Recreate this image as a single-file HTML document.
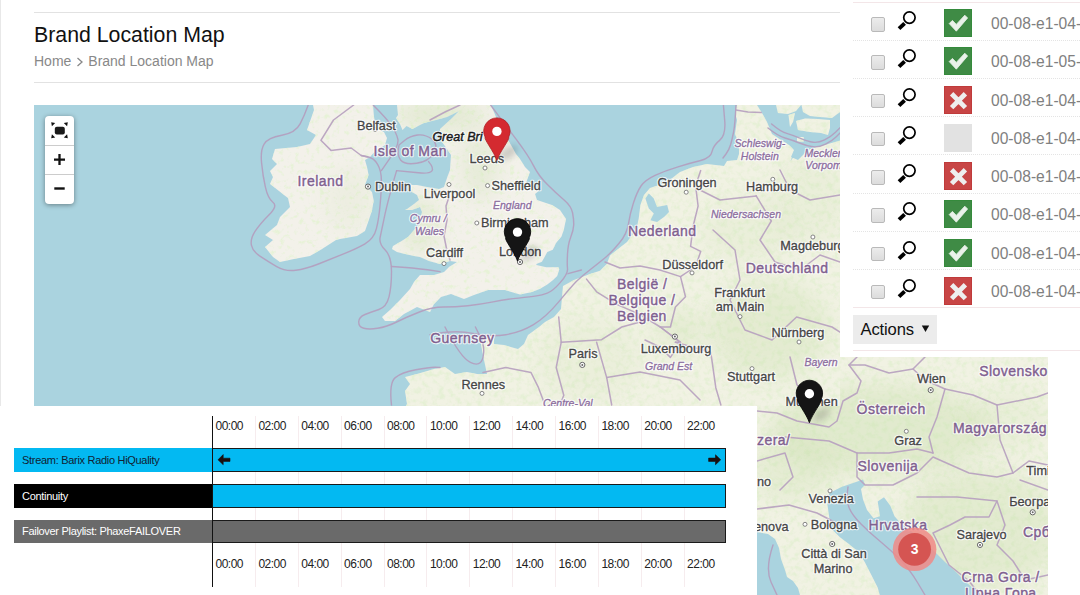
<!DOCTYPE html>
<html><head><meta charset="utf-8"><style>
*{box-sizing:border-box}
html,body{margin:0;padding:0}
body{width:1080px;height:595px;position:relative;overflow:hidden;background:#fff;font-family:"Liberation Sans",sans-serif}
.abs{position:absolute}
.cb{width:14px;height:14.5px;border:1px solid #b9b9b9;border-radius:2px;background:linear-gradient(#ececec,#dcdcdc)}
.st{width:28.2px;height:28px;border:1px solid}
.tt{font-size:15.6px;color:#808080;white-space:nowrap;line-height:18px}
.tl{font-size:12px;letter-spacing:-0.5px;color:#222;white-space:nowrap;line-height:14px}
.lb{font-size:11px;letter-spacing:-0.3px;white-space:nowrap;line-height:13px}

text{font-family:"Liberation Sans",sans-serif}
text.halo{fill:#fff;stroke:#fff;stroke-opacity:0.8;fill-opacity:0.8;stroke-width:2.6px;stroke-linejoin:round}
text.city{font-size:12.7px}
text.city.ink{fill:#454545;stroke:#454545;stroke-width:0.3px}
text.country{font-size:14px;letter-spacing:0.45px}
text.country.ink{fill:#7f608f;stroke:#7f608f;stroke-width:0.4px}
text.state{font-size:10.5px;font-style:italic}
text.state.ink{fill:#8c6e9e;stroke:#8c6e9e;stroke-width:0.3px}
text.clu{font-size:14px;font-weight:bold;fill:#fff;stroke:none}
text.gb{font-size:12.5px;font-style:italic}
text.gb.ink{fill:#1a1a1a;stroke:#1a1a1a;stroke-width:0.45px}
</style></head><body>
<div class="abs" style="left:0;top:0;width:1px;height:406px;background:#e8e8e8"></div>
<div class="abs" style="left:34px;top:12px;width:806px;height:1px;background:#e2e2e2"></div>
<div class="abs" style="left:34px;top:22px;font-size:21.3px;color:#111;white-space:nowrap;line-height:26px">Brand Location Map</div>
<div class="abs" style="left:34px;top:53px;font-size:14px;color:#888;white-space:nowrap;line-height:17px">Home</div>
<svg class="abs" style="left:76px;top:57px" width="8" height="10" viewBox="0 0 8 10"><path d="M1.5,1 L6,5 L1.5,9" fill="none" stroke="#888" stroke-width="1.3"/></svg>
<div class="abs" style="left:88.3px;top:53px;font-size:14px;color:#888;white-space:nowrap;line-height:17px">Brand Location Map</div>
<div class="abs" style="left:34px;top:82px;width:806px;height:1px;background:#e2e2e2"></div>
<svg class="abs" style="left:0;top:0" width="1080" height="595" viewBox="0 0 1080 595">
<defs>
<clipPath id="c1"><rect x="34" y="105" width="806" height="301"/></clipPath>
<clipPath id="c2"><path d="M840,357 L1048,357 L1048,595 L757,595 L757,406 L840,406 Z"/></clipPath>
<clipPath id="c2b"><rect x="757" y="105" width="291" height="490"/></clipPath>
<clipPath id="landclip"><path fill="#000" d="M313.0,105.0 L373.0,105.0 L374.0,117.0 L375.0,123.0 L378.0,129.0 L384.0,132.0 L387.0,138.0 L385.0,145.0 L374.0,152.5 L370.0,157.0 L365.0,160.0 L367.0,167.0 L368.6,175.0 L365.0,185.0 L372.0,192.0 L373.7,200.5 L372.0,210.6 L368.6,220.7 L365.0,231.0 L357.0,236.0 L340.0,239.0 L336.0,240.0 L322.0,249.0 L310.0,256.0 L294.0,259.0 L280.0,262.0 L273.0,257.0 L265.0,247.0 L273.0,240.0 L265.0,235.0 L277.0,225.0 L280.0,217.0 L290.0,207.0 L288.0,198.0 L284.0,195.0 L279.0,191.0 L270.0,184.0 L273.0,177.0 L270.0,171.0 L277.0,164.0 L272.0,159.0 L275.0,149.0 L297.0,147.0 L310.0,144.0 L316.0,135.0 L307.0,130.0 L314.0,110.0 Z" /><path fill="#000" d="M397.0,105.0 L491.0,105.0 L498.0,122.0 L504.0,134.0 L511.0,145.0 L516.0,154.0 L520.0,159.0 L525.0,167.0 L530.0,172.0 L526.0,183.0 L537.0,191.0 L540.0,190.0 L535.0,194.0 L537.0,200.0 L552.0,205.0 L560.0,210.0 L566.0,219.0 L564.0,229.0 L561.5,236.6 L556.0,243.0 L552.8,249.7 L547.3,251.9 L545.0,256.2 L541.9,261.7 L536.4,264.0 L536.4,265.0 L546.2,267.2 L558.3,267.2 L559.3,269.3 L557.2,275.9 L552.8,280.3 L547.3,284.6 L539.7,289.0 L531.0,292.3 L520.0,294.5 L505.0,290.0 L488.0,290.0 L474.0,295.0 L464.0,299.0 L451.0,294.0 L441.0,297.0 L434.0,304.0 L430.0,312.0 L417.0,307.0 L404.0,314.0 L395.0,321.0 L385.0,321.0 L382.0,317.0 L390.0,310.0 L400.0,300.0 L410.0,289.0 L414.0,282.0 L420.0,275.0 L434.0,275.0 L444.0,272.0 L449.0,267.0 L457.0,262.0 L450.0,261.0 L440.0,264.0 L429.0,261.0 L420.0,257.0 L414.0,256.0 L405.0,254.0 L397.0,252.0 L392.0,249.0 L393.0,246.0 L400.0,242.0 L408.0,237.0 L414.0,230.0 L419.0,224.0 L420.0,219.0 L422.0,212.0 L420.0,207.0 L412.0,210.0 L405.0,210.0 L407.0,209.0 L414.0,204.0 L419.0,200.0 L417.0,195.0 L412.0,192.0 L410.0,185.0 L417.0,185.0 L427.0,187.0 L439.0,189.0 L444.0,187.0 L447.0,178.0 L450.0,170.0 L451.0,155.0 L447.0,149.0 L440.0,139.0 L440.0,129.0 L450.0,120.0 L459.0,111.0 L447.0,117.0 L436.0,120.0 L424.0,123.0 L420.0,125.0 L412.5,129.0 L406.5,126.0 L402.5,130.0 L400.0,124.0 L396.0,118.0 L398.0,115.0 Z" /><path fill="#000" d="M737.0,105.0 L735.0,113.0 L737.0,120.0 L735.0,134.0 L739.0,144.0 L739.0,154.0 L737.0,160.0 L727.0,161.0 L724.0,166.0 L707.0,164.0 L693.0,167.0 L680.0,172.0 L666.0,183.0 L659.0,185.0 L650.0,188.0 L644.0,195.0 L640.4,205.0 L638.7,218.6 L637.0,227.0 L632.0,235.4 L627.0,242.0 L620.2,247.2 L610.0,255.6 L606.8,264.0 L600.0,270.7 L590.0,274.0 L574.0,280.0 L563.0,286.0 L562.0,297.0 L561.0,309.0 L554.0,317.0 L545.0,322.0 L539.0,327.0 L528.0,335.0 L524.0,344.0 L518.0,349.0 L504.0,345.0 L494.0,344.0 L494.0,335.0 L484.0,335.0 L481.0,344.0 L482.0,350.0 L484.0,360.0 L487.0,374.0 L477.0,374.0 L467.0,372.0 L455.0,374.0 L445.0,367.0 L434.0,369.0 L417.0,374.0 L405.0,377.0 L410.0,384.0 L405.0,391.0 L407.0,404.0 L406.0,406.0 L840.0,406.0 L840.0,140.0 L825.0,144.0 L808.0,150.0 L798.0,160.0 L791.0,157.0 L794.0,150.0 L789.0,145.0 L781.0,140.0 L772.0,134.0 L767.0,122.0 L762.0,113.0 L757.0,105.0 Z" /></clipPath>
<filter id="tex" x="0" y="0" width="1080" height="595" filterUnits="userSpaceOnUse"><feTurbulence type="fractalNoise" baseFrequency="0.18" numOctaves="3" seed="7" result="n"/><feColorMatrix in="n" type="matrix" values="0 0 0 0 0.78  0 0 0 0 0.87  0 0 0 0 0.66  3.2 0 0 0 -1.45" result="g"/><feComposite in="g" in2="SourceAlpha" operator="in" result="gl"/><feMerge><feMergeNode in="SourceGraphic"/><feMergeNode in="gl"/></feMerge></filter>
<filter id="tex2" x="0" y="0" width="1080" height="595" filterUnits="userSpaceOnUse"><feTurbulence type="fractalNoise" baseFrequency="0.2" numOctaves="3" seed="11" result="n"/><feColorMatrix in="n" type="matrix" values="0 0 0 0 0.80  0 0 0 0 0.89  0 0 0 0 0.68  4.0 0 0 0 -2.15" result="g"/><feComposite in="g" in2="SourceAlpha" operator="in" result="gl"/><feMerge><feMergeNode in="SourceGraphic"/><feMergeNode in="gl"/></feMerge></filter>
<filter id="blur8" x="-50%" y="-50%" width="200%" height="200%"><feGaussianBlur stdDeviation="10"/></filter>
<filter id="blur3" x="-50%" y="-50%" width="200%" height="200%"><feGaussianBlur stdDeviation="3"/></filter>
</defs>
<g clip-path="url(#c1)">
<rect x="34" y="105" width="806" height="301" fill="#aad3df"/>
<g filter="url(#tex2)">
<path fill="#f3f1ea" d="M313.0,105.0 L373.0,105.0 L374.0,117.0 L375.0,123.0 L378.0,129.0 L384.0,132.0 L387.0,138.0 L385.0,145.0 L374.0,152.5 L370.0,157.0 L365.0,160.0 L367.0,167.0 L368.6,175.0 L365.0,185.0 L372.0,192.0 L373.7,200.5 L372.0,210.6 L368.6,220.7 L365.0,231.0 L357.0,236.0 L340.0,239.0 L336.0,240.0 L322.0,249.0 L310.0,256.0 L294.0,259.0 L280.0,262.0 L273.0,257.0 L265.0,247.0 L273.0,240.0 L265.0,235.0 L277.0,225.0 L280.0,217.0 L290.0,207.0 L288.0,198.0 L284.0,195.0 L279.0,191.0 L270.0,184.0 L273.0,177.0 L270.0,171.0 L277.0,164.0 L272.0,159.0 L275.0,149.0 L297.0,147.0 L310.0,144.0 L316.0,135.0 L307.0,130.0 L314.0,110.0 Z" />
<path fill="#f3f1ea" d="M397.0,105.0 L491.0,105.0 L498.0,122.0 L504.0,134.0 L511.0,145.0 L516.0,154.0 L520.0,159.0 L525.0,167.0 L530.0,172.0 L526.0,183.0 L537.0,191.0 L540.0,190.0 L535.0,194.0 L537.0,200.0 L552.0,205.0 L560.0,210.0 L566.0,219.0 L564.0,229.0 L561.5,236.6 L556.0,243.0 L552.8,249.7 L547.3,251.9 L545.0,256.2 L541.9,261.7 L536.4,264.0 L536.4,265.0 L546.2,267.2 L558.3,267.2 L559.3,269.3 L557.2,275.9 L552.8,280.3 L547.3,284.6 L539.7,289.0 L531.0,292.3 L520.0,294.5 L505.0,290.0 L488.0,290.0 L474.0,295.0 L464.0,299.0 L451.0,294.0 L441.0,297.0 L434.0,304.0 L430.0,312.0 L417.0,307.0 L404.0,314.0 L395.0,321.0 L385.0,321.0 L382.0,317.0 L390.0,310.0 L400.0,300.0 L410.0,289.0 L414.0,282.0 L420.0,275.0 L434.0,275.0 L444.0,272.0 L449.0,267.0 L457.0,262.0 L450.0,261.0 L440.0,264.0 L429.0,261.0 L420.0,257.0 L414.0,256.0 L405.0,254.0 L397.0,252.0 L392.0,249.0 L393.0,246.0 L400.0,242.0 L408.0,237.0 L414.0,230.0 L419.0,224.0 L420.0,219.0 L422.0,212.0 L420.0,207.0 L412.0,210.0 L405.0,210.0 L407.0,209.0 L414.0,204.0 L419.0,200.0 L417.0,195.0 L412.0,192.0 L410.0,185.0 L417.0,185.0 L427.0,187.0 L439.0,189.0 L444.0,187.0 L447.0,178.0 L450.0,170.0 L451.0,155.0 L447.0,149.0 L440.0,139.0 L440.0,129.0 L450.0,120.0 L459.0,111.0 L447.0,117.0 L436.0,120.0 L424.0,123.0 L420.0,125.0 L412.5,129.0 L406.5,126.0 L402.5,130.0 L400.0,124.0 L396.0,118.0 L398.0,115.0 Z" />
</g>
<g filter="url(#tex)">
<path fill="#f1f2e3" d="M737.0,105.0 L735.0,113.0 L737.0,120.0 L735.0,134.0 L739.0,144.0 L739.0,154.0 L737.0,160.0 L727.0,161.0 L724.0,166.0 L707.0,164.0 L693.0,167.0 L680.0,172.0 L666.0,183.0 L659.0,185.0 L650.0,188.0 L644.0,195.0 L640.4,205.0 L638.7,218.6 L637.0,227.0 L632.0,235.4 L627.0,242.0 L620.2,247.2 L610.0,255.6 L606.8,264.0 L600.0,270.7 L590.0,274.0 L574.0,280.0 L563.0,286.0 L562.0,297.0 L561.0,309.0 L554.0,317.0 L545.0,322.0 L539.0,327.0 L528.0,335.0 L524.0,344.0 L518.0,349.0 L504.0,345.0 L494.0,344.0 L494.0,335.0 L484.0,335.0 L481.0,344.0 L482.0,350.0 L484.0,360.0 L487.0,374.0 L477.0,374.0 L467.0,372.0 L455.0,374.0 L445.0,367.0 L434.0,369.0 L417.0,374.0 L405.0,377.0 L410.0,384.0 L405.0,391.0 L407.0,404.0 L406.0,406.0 L840.0,406.0 L840.0,140.0 L825.0,144.0 L808.0,150.0 L798.0,160.0 L791.0,157.0 L794.0,150.0 L789.0,145.0 L781.0,140.0 L772.0,134.0 L767.0,122.0 L762.0,113.0 L757.0,105.0 Z" />
</g>
<g clip-path="url(#landclip)"><ellipse cx="440" cy="115" rx="45" ry="14" fill="#c4dca6" opacity="0.35" filter="url(#blur8)"/>
<ellipse cx="480" cy="165" rx="18" ry="35" fill="#c4dca6" opacity="0.25" filter="url(#blur8)"/>
<ellipse cx="420" cy="225" rx="18" ry="28" fill="#c4dca6" opacity="0.3" filter="url(#blur8)"/>
<ellipse cx="350" cy="200" rx="25" ry="30" fill="#c4dca6" opacity="0.12" filter="url(#blur8)"/>
<ellipse cx="770" cy="330" rx="60" ry="50" fill="#c4dca6" opacity="0.28" filter="url(#blur8)"/>
<ellipse cx="680" cy="330" rx="25" ry="20" fill="#c4dca6" opacity="0.25" filter="url(#blur8)"/>
<ellipse cx="750" cy="230" rx="45" ry="30" fill="#c4dca6" opacity="0.15" filter="url(#blur8)"/>
<ellipse cx="590" cy="360" rx="50" ry="40" fill="#c4dca6" opacity="0.12" filter="url(#blur8)"/>
<ellipse cx="810" cy="200" rx="35" ry="40" fill="#c4dca6" opacity="0.15" filter="url(#blur8)"/></g>
<path fill="#aad3df" d="M774.0,105.0 L840.0,105.0 L840.0,140.4 L836.5,141.5 L818.0,147.0 L806.0,143.7 L800.0,150.0 L794.0,156.0 L790.6,161.2 L792.8,154.6 L796.0,146.0 L792.8,140.4 L781.9,136.0 L772.0,127.3 L770.0,122.0 L774.0,114.0 Z" />
<g filter="url(#tex)">
<path fill="#f1f2e3" d="M776.0,105.0 L801.0,105.0 L796.0,111.0 L788.0,114.0 L778.0,113.0 Z" />
<path fill="#f1f2e3" d="M796.0,121.0 L805.0,118.6 L818.0,119.0 L830.0,120.0 L830.0,128.0 L828.0,135.0 L821.0,133.0 L810.0,132.0 L798.0,130.0 Z" />
<path fill="#f1f2e3" d="M801.5,105.0 L840.0,105.0 L840.0,112.0 L832.0,118.0 L820.0,117.0 L810.0,116.0 L803.0,112.0 Z" />
<path fill="#f1f2e3" d="M788.5,115.0 L795.0,113.0 L793.0,122.0 L790.0,127.0 Z" />
<path fill="#f1f2e3" d="M797.0,137.0 L803.7,137.0 L803.7,141.5 L797.0,141.5 Z" />
</g>
<path fill="#aad3df" d="M645.4,198.5 L648.8,208.5 L653.8,213.6 L650.4,220.3 L657.0,222.0 L664.0,217.0 L669.0,212.0 L667.2,205.0 L657.0,207.0 L653.8,198.5 L648.8,193.4 Z" />
<path fill="none" stroke="#b39fbf" stroke-width="1.4" stroke-linejoin="round" stroke-linecap="round" d="M308.2,105.0 Q304.7,115.0 300.1,123.9 Q295.6,132.8 281.8,135.3 Q267.9,137.8 264.1,144.1 Q260.3,150.4 261.6,163.1 Q262.8,175.7 265.4,187.1 Q267.9,198.4 272.9,202.2 Q278.0,206.0 269.1,214.8 Q260.3,223.6 255.2,231.2 Q250.2,238.8 251.4,245.1 Q252.7,251.4 260.3,256.4 Q267.9,261.5 276.7,266.6 Q285.5,271.6 295.6,270.3 Q305.7,269.0 318.4,264.0 Q331.0,259.0 343.6,253.9 Q356.2,248.9 365.0,243.9 Q373.9,238.8 376.4,228.7 Q378.9,218.6 380.1,204.7 Q381.4,190.8 381.4,180.7 Q381.4,170.6 377.6,164.3 Q373.9,158.0 367.5,156.8 L361.2,155.5" opacity="0.95"/>
<path fill="none" stroke="#b8a2c0" stroke-width="1.5" stroke-linejoin="round" stroke-linecap="round" d="M353.7,105.0 L333.5,120.0 L320.9,140.3 L331.0,150.4 L351.2,148.0 L361.2,155.5 L367.7,157.0" opacity="0.95"/>
<path fill="none" stroke="#b39fbf" stroke-width="1.4" stroke-linejoin="round" stroke-linecap="round" d="M373.3,105.2 Q387.6,119.4 392.1,126.5 Q396.7,133.7 397.9,139.3 Q399.0,145.0 390.2,157.8 L381.4,170.6" opacity="0.95"/>
<path fill="none" stroke="#b39fbf" stroke-width="1.4" stroke-linejoin="round" stroke-linecap="round" d="M399.0,145.0 Q396.6,155.0 400.6,160.0 Q404.6,165.0 416.6,163.3 Q428.6,161.6 433.8,153.1 Q439.0,144.5 432.0,139.2 Q425.0,134.0 417.5,135.0 Q410.0,136.0 404.5,140.5 L399.0,145.0" opacity="0.95"/>
<path fill="none" stroke="#b39fbf" stroke-width="1.4" stroke-linejoin="round" stroke-linecap="round" d="M396.6,170.6 Q388.0,200.0 384.7,215.6 Q381.4,231.2 380.1,237.5 Q378.9,243.8 385.2,250.1 Q391.5,256.4 391.5,271.5 Q391.5,286.7 389.0,296.9 Q386.5,307.0 378.9,309.5 Q371.3,312.0 365.0,314.5 Q358.7,317.0 358.7,322.0 Q358.7,327.0 363.8,328.3 Q368.8,329.6 377.6,328.3 Q386.5,327.0 396.6,322.0 Q406.7,317.0 419.4,312.0 Q432.0,307.0 443.6,307.0 Q455.2,307.0 467.9,305.7 Q480.5,304.4 493.1,301.9 Q505.7,299.3 518.4,298.1 Q531.0,296.8 536.5,295.9 Q541.9,295.0 547.3,293.1 Q552.8,291.2 560.4,282.4 Q568.0,273.7 567.5,268.8 Q567.0,263.9 567.5,254.0 Q568.0,244.2 570.8,237.1 Q573.5,230.0 573.7,225.0 Q573.9,220.0 572.6,213.0 Q571.3,206.0 563.8,199.7 Q556.2,193.3 547.4,184.5 Q538.5,175.7 533.5,165.6 Q528.4,155.5 517.0,140.3 Q505.7,125.2 498.1,115.1 L490.6,105.0" opacity="0.95"/>
<path fill="none" stroke="#b39fbf" stroke-width="1.4" stroke-linejoin="round" stroke-linecap="round" d="M391.5,266.5 Q415.0,268.0 427.5,269.8 L440.0,271.6" opacity="0.95"/>
<path fill="none" stroke="#b39fbf" stroke-width="1.4" stroke-linejoin="round" stroke-linecap="round" d="M428.6,161.6 Q440.0,175.0 418.3,172.8 L396.6,170.6" opacity="0.95"/>
<path fill="none" stroke="#b39fbf" stroke-width="1.4" stroke-linejoin="round" stroke-linecap="round" d="M391.5,405.0 Q389.0,382.6 395.3,377.6 Q401.6,372.5 415.8,369.8 Q430.0,367.0 435.0,367.2 L440.0,367.5" opacity="0.95"/>
<path fill="none" stroke="#b39fbf" stroke-width="1.4" stroke-linejoin="round" stroke-linecap="round" d="M430.0,334.7 Q455.2,329.6 472.9,333.4 Q490.6,337.2 505.8,334.7 Q520.9,332.2 533.5,324.6 Q546.1,317.0 558.7,301.9 Q571.3,286.7 576.3,281.6 Q581.4,276.6 590.7,269.3 Q600.0,262.0 606.0,257.0 Q612.0,252.0 619.5,242.8 Q627.0,233.7 628.5,223.6 Q630.0,213.6 633.5,202.8 Q637.0,192.0 641.0,186.0 Q645.0,180.0 655.1,175.3 Q665.3,170.6 678.0,166.8 Q690.6,163.0 700.7,160.5 Q710.8,158.0 712.0,151.7 Q713.3,145.4 719.6,140.4 Q726.0,135.3 724.7,120.2 L723.4,105.0" opacity="0.95"/>
<path fill="none" stroke="#b39fbf" stroke-width="1.4" stroke-linejoin="round" stroke-linecap="round" d="M568.0,273.7 L581.4,270.0" opacity="0.95"/>
<path fill="none" stroke="#b39fbf" stroke-width="1.4" stroke-linejoin="round" stroke-linecap="round" d="M445.0,327.0 Q460.3,357.4 470.4,362.4 Q480.5,367.5 483.0,357.4 Q485.5,347.3 480.4,337.1 L475.4,327.0" opacity="0.95"/>
<path fill="none" stroke="#b8a2c0" stroke-width="1.5" stroke-linejoin="round" stroke-linecap="round" d="M449.0,197.0 L446.0,206.0 L447.0,220.0 L444.0,236.0 L447.0,251.0 L450.0,260.0" opacity="0.95"/>
<path fill="none" stroke="#b8a2c0" stroke-width="1.5" stroke-linejoin="round" stroke-linecap="round" d="M430.0,120.0 L445.0,112.0 L460.0,105.0" opacity="0.95"/>
<path fill="none" stroke="#b8a2c0" stroke-width="1.5" stroke-linejoin="round" stroke-linecap="round" d="M586.5,279.1 L596.6,291.8 L616.8,304.4 L640.0,314.5 L660.3,327.0 L680.5,342.3 L675.4,342.3" opacity="0.95"/>
<path fill="none" stroke="#b8a2c0" stroke-width="1.5" stroke-linejoin="round" stroke-linecap="round" d="M605.0,262.0 L620.0,268.0 L640.0,266.0 L660.0,270.0 L680.5,276.6" opacity="0.95"/>
<path fill="none" stroke="#b8a2c0" stroke-width="1.5" stroke-linejoin="round" stroke-linecap="round" d="M700.7,170.6 L695.6,185.8 L698.1,206.0 L693.1,226.2 L690.6,246.3 L700.7,251.4 L695.6,266.5 L680.5,276.6 L685.5,296.8 L675.4,307.0 L670.4,327.0 L660.3,327.0" opacity="0.95"/>
<path fill="none" stroke="#b8a2c0" stroke-width="1.5" stroke-linejoin="round" stroke-linecap="round" d="M660.3,327.0 L680.5,342.3 L670.4,357.4 L660.3,347.3 L645.0,340.0" opacity="0.95"/>
<path fill="none" stroke="#b8a2c0" stroke-width="1.5" stroke-linejoin="round" stroke-linecap="round" d="M675.4,342.3 L710.8,352.3 L715.8,387.7 L720.9,405.0" opacity="0.95"/>
<path fill="none" stroke="#b8a2c0" stroke-width="1.5" stroke-linejoin="round" stroke-linecap="round" d="M483.0,372.5 L505.7,367.5 L531.0,372.5 L538.5,387.7 L545.0,405.0" opacity="0.95"/>
<path fill="none" stroke="#b8a2c0" stroke-width="1.5" stroke-linejoin="round" stroke-linecap="round" d="M558.7,317.0 L561.2,342.3 L556.2,367.5 L563.8,395.3 L560.0,405.0" opacity="0.95"/>
<path fill="none" stroke="#b8a2c0" stroke-width="1.5" stroke-linejoin="round" stroke-linecap="round" d="M561.2,342.3 L601.6,339.7 L621.8,327.0 L640.0,322.0" opacity="0.95"/>
<path fill="none" stroke="#b8a2c0" stroke-width="1.5" stroke-linejoin="round" stroke-linecap="round" d="M596.6,342.3 L606.7,377.6 L611.7,405.0" opacity="0.95"/>
<path fill="none" stroke="#b8a2c0" stroke-width="1.5" stroke-linejoin="round" stroke-linecap="round" d="M606.7,377.6 L640.0,372.0 L680.0,380.0 L700.0,400.0" opacity="0.95"/>
<path fill="none" stroke="#b39fbf" stroke-width="1.4" stroke-linejoin="round" stroke-linecap="round" d="M771.6,124.0 Q780.4,131.5 786.7,133.4 Q793.0,135.3 800.5,138.4 Q808.0,141.6 813.1,142.2 Q818.3,142.9 824.6,139.8 Q831.0,136.6 835.5,132.2 L840.0,127.7" opacity="0.95"/>
<path fill="none" stroke="#b39fbf" stroke-width="1.4" stroke-linejoin="round" stroke-linecap="round" d="M768.0,128.0 Q778.0,136.0 785.0,138.0 Q792.0,140.0 799.5,143.0 Q807.0,146.0 813.0,146.8 Q819.0,147.5 825.5,144.2 Q832.0,141.0 836.0,137.0 L840.0,133.0" opacity="0.95"/>
<path fill="none" stroke="#b39fbf" stroke-width="1.4" stroke-linejoin="round" stroke-linecap="round" d="M736.0,105.0 Q735.0,125.0 733.5,132.5 Q732.0,140.0 730.5,145.0 Q729.0,150.0 726.0,154.0 L723.0,158.0" opacity="0.95"/>
<path fill="none" stroke="#b8a2c0" stroke-width="1.5" stroke-linejoin="round" stroke-linecap="round" d="M736.0,110.0 L748.0,112.0 L761.2,112.6" opacity="0.95"/>
<path fill="none" stroke="#b8a2c0" stroke-width="1.5" stroke-linejoin="round" stroke-linecap="round" d="M756.2,195.9 L771.3,221.0 L760.0,240.0 L775.0,262.0 L800.0,270.0 L820.0,255.0 L840.0,262.0" opacity="0.95"/>
<path fill="none" stroke="#b8a2c0" stroke-width="1.5" stroke-linejoin="round" stroke-linecap="round" d="M713.0,230.0 L735.0,250.0 L740.0,280.0 L730.0,300.0 L745.0,330.0 L772.0,340.0 L796.6,317.0 L832.0,327.0 L840.0,332.2" opacity="0.95"/>
<path fill="none" stroke="#b8a2c0" stroke-width="1.5" stroke-linejoin="round" stroke-linecap="round" d="M780.0,170.0 L790.0,190.0 L810.0,200.0 L840.0,195.0" opacity="0.95"/>
<path fill="none" stroke="#b8a2c0" stroke-width="1.5" stroke-linejoin="round" stroke-linecap="round" d="M700.0,190.0 L720.0,200.0 L756.2,195.9" opacity="0.95"/>
<path fill="none" stroke="#b8a2c0" stroke-width="1.5" stroke-linejoin="round" stroke-linecap="round" d="M790.0,357.0 L797.0,385.0 L810.0,395.0 L829.0,404.0" opacity="0.95"/>
<circle cx="375" cy="129.5" r="2" fill="#fff" stroke="#777" stroke-width="0.9"/>
<circle cx="368" cy="186.6" r="2.6" fill="#fff" stroke="#666" stroke-width="1"/><circle cx="368" cy="186.6" r="1" fill="#666"/>
<circle cx="485" cy="168" r="2" fill="#fff" stroke="#777" stroke-width="0.9"/>
<circle cx="487.6" cy="185.6" r="2" fill="#fff" stroke="#777" stroke-width="0.9"/>
<circle cx="449" cy="184.5" r="2" fill="#fff" stroke="#777" stroke-width="0.9"/>
<circle cx="476.8" cy="223" r="2" fill="#fff" stroke="#777" stroke-width="0.9"/>
<circle cx="520" cy="262" r="2.6" fill="#fff" stroke="#666" stroke-width="1"/><circle cx="520" cy="262" r="1" fill="#666"/>
<circle cx="686.2" cy="192.2" r="2" fill="#fff" stroke="#777" stroke-width="0.9"/>
<circle cx="772.8" cy="179.3" r="2" fill="#fff" stroke="#777" stroke-width="0.9"/>
<circle cx="812.9" cy="237" r="2" fill="#fff" stroke="#777" stroke-width="0.9"/>
<circle cx="692" cy="272.9" r="2" fill="#fff" stroke="#777" stroke-width="0.9"/>
<circle cx="740" cy="316.6" r="2" fill="#fff" stroke="#777" stroke-width="0.9"/>
<circle cx="799" cy="342" r="2" fill="#fff" stroke="#777" stroke-width="0.9"/>
<circle cx="582.3" cy="364.9" r="2.6" fill="#fff" stroke="#666" stroke-width="1"/><circle cx="582.3" cy="364.9" r="1" fill="#666"/>
<circle cx="674.9" cy="336.6" r="2.6" fill="#fff" stroke="#666" stroke-width="1"/><circle cx="674.9" cy="336.6" r="1" fill="#666"/>
<circle cx="752" cy="368.6" r="2" fill="#fff" stroke="#777" stroke-width="0.9"/>
<circle cx="482" cy="393.4" r="2" fill="#fff" stroke="#777" stroke-width="0.9"/>
<circle cx="444" cy="263.6" r="2" fill="#fff" stroke="#777" stroke-width="0.9"/>
<text class="city halo" x="357" y="130">Belfast</text>
<text class="country halo" x="373.5" y="156">Isle of Man</text>
<text class="country halo" x="297.5" y="186">Ireland</text>
<text class="city halo" x="375" y="191.4">Dublin</text>
<text class="gb halo" x="432.4" y="140.9">Great Bri</text>
<text class="city halo" x="469.5" y="163.2">Leeds</text>
<text class="city halo" x="491.6" y="190">Sheffield</text>
<text class="city halo" x="423.8" y="198.2">Liverpool</text>
<text class="state halo" x="493" y="209">England</text>
<text class="state halo" x="409.8" y="221.6">Cymru /</text>
<text class="state halo" x="415" y="234.5">Wales</text>
<text class="city halo" x="481" y="227.3">Birmingham</text>
<text class="city halo" x="426" y="257.4">Cardiff</text>
<text class="city halo" x="499" y="255.5">London</text>
<text class="city halo" x="657.4" y="187.4">Groningen</text>
<text class="city halo" x="746" y="191.4">Hamburg</text>
<text class="state halo" x="734.6" y="147">Schleswig-</text>
<text class="state halo" x="740.8" y="159.7">Holstein</text>
<text class="state halo" x="804.5" y="156.5">Mecklenburg-</text>
<text class="state halo" x="805.3" y="169.4">Vorpommern</text>
<text class="state halo" x="711" y="218.3">Niedersachsen</text>
<text class="country halo" x="627.9" y="235.8">Nederland</text>
<text class="city halo" x="780.3" y="250.4">Magdeburg</text>
<text class="city halo" x="662.3" y="268.6">Düsseldorf</text>
<text class="country halo" x="745.7" y="272.9">Deutschland</text>
<text class="country halo" x="617" y="289">België /</text>
<text class="country halo" x="608.6" y="305">Belgique /</text>
<text class="country halo" x="617" y="320.9">Belgien</text>
<text class="city halo" x="714.3" y="297">Frankfurt</text>
<text class="city halo" x="715.7" y="311.4">am Main</text>
<text class="city halo" x="771.4" y="337">Nürnberg</text>
<text class="country halo" x="430.2" y="342.8">Guernsey</text>
<text class="city halo" x="568.6" y="358">Paris</text>
<text class="city halo" x="640.7" y="352.5">Luxembourg</text>
<text class="state halo" x="645" y="370">Grand Est</text>
<text class="city halo" x="727" y="381.4">Stuttgart</text>
<text class="city halo" x="461.4" y="388.6">Rennes</text>
<text class="state halo" x="542.9" y="407">Centre-Val</text>
<text class="state halo" x="804.4" y="366">Bayern</text>
<text class="city halo" x="785.5" y="406">München</text>
<text class="city ink" x="357" y="130">Belfast</text>
<text class="country ink" x="373.5" y="156">Isle of Man</text>
<text class="country ink" x="297.5" y="186">Ireland</text>
<text class="city ink" x="375" y="191.4">Dublin</text>
<text class="gb ink" x="432.4" y="140.9">Great Bri</text>
<text class="city ink" x="469.5" y="163.2">Leeds</text>
<text class="city ink" x="491.6" y="190">Sheffield</text>
<text class="city ink" x="423.8" y="198.2">Liverpool</text>
<text class="state ink" x="493" y="209">England</text>
<text class="state ink" x="409.8" y="221.6">Cymru /</text>
<text class="state ink" x="415" y="234.5">Wales</text>
<text class="city ink" x="481" y="227.3">Birmingham</text>
<text class="city ink" x="426" y="257.4">Cardiff</text>
<text class="city ink" x="499" y="255.5">London</text>
<text class="city ink" x="657.4" y="187.4">Groningen</text>
<text class="city ink" x="746" y="191.4">Hamburg</text>
<text class="state ink" x="734.6" y="147">Schleswig-</text>
<text class="state ink" x="740.8" y="159.7">Holstein</text>
<text class="state ink" x="804.5" y="156.5">Mecklenburg-</text>
<text class="state ink" x="805.3" y="169.4">Vorpommern</text>
<text class="state ink" x="711" y="218.3">Niedersachsen</text>
<text class="country ink" x="627.9" y="235.8">Nederland</text>
<text class="city ink" x="780.3" y="250.4">Magdeburg</text>
<text class="city ink" x="662.3" y="268.6">Düsseldorf</text>
<text class="country ink" x="745.7" y="272.9">Deutschland</text>
<text class="country ink" x="617" y="289">België /</text>
<text class="country ink" x="608.6" y="305">Belgique /</text>
<text class="country ink" x="617" y="320.9">Belgien</text>
<text class="city ink" x="714.3" y="297">Frankfurt</text>
<text class="city ink" x="715.7" y="311.4">am Main</text>
<text class="city ink" x="771.4" y="337">Nürnberg</text>
<text class="country ink" x="430.2" y="342.8">Guernsey</text>
<text class="city ink" x="568.6" y="358">Paris</text>
<text class="city ink" x="640.7" y="352.5">Luxembourg</text>
<text class="state ink" x="645" y="370">Grand Est</text>
<text class="city ink" x="727" y="381.4">Stuttgart</text>
<text class="city ink" x="461.4" y="388.6">Rennes</text>
<text class="state ink" x="542.9" y="407">Centre-Val</text>
<text class="state ink" x="804.4" y="366">Bayern</text>
<text class="city ink" x="785.5" y="406">München</text>
<ellipse cx="508.9" cy="152.4" rx="10" ry="5" fill="#000" opacity="0.16" filter="url(#blur3)" transform="rotate(-35 508.9 152.4)"/><path d="M496.9,160.4 C493.9,151.4 483.61543072042497,139.04675767918087 485.11543072042497,137.04675767918087 A13.2,13.2 0 1,1 508.684569279575,137.04675767918087 C510.184569279575,139.04675767918087 499.9,151.4 496.9,160.4 Z" fill="#d42a30" stroke="#b01c22" stroke-width="0.8"/><circle cx="496.9" cy="131.4" r="4.7" fill="#fff"/>
<ellipse cx="529.5" cy="253.10000000000002" rx="10" ry="5" fill="#000" opacity="0.16" filter="url(#blur3)" transform="rotate(-35 529.5 253.10000000000002)"/><path d="M517.5,261.1 C514.5,252.10000000000002 504.215430720425,239.74675767918086 505.715430720425,237.74675767918086 A13.2,13.2 0 1,1 529.2845692795751,237.74675767918086 C530.7845692795751,239.74675767918086 520.5,252.10000000000002 517.5,261.1 Z" fill="#151515" stroke="#000" stroke-width="0.8"/><circle cx="517.5" cy="232.1" r="4.7" fill="#fff"/>
</g>
<g clip-path="url(#c2)">
<rect x="757" y="357" width="291" height="238" fill="#f1f2e3" filter="url(#tex)"/>
<ellipse cx="880" cy="430" rx="110" ry="45" fill="#c4dca6" opacity="0.35" filter="url(#blur8)"/>
<ellipse cx="980" cy="530" rx="80" ry="60" fill="#c4dca6" opacity="0.3" filter="url(#blur8)"/>
<ellipse cx="790" cy="470" rx="40" ry="30" fill="#c4dca6" opacity="0.25" filter="url(#blur8)"/>
<ellipse cx="1010" cy="420" rx="40" ry="30" fill="#c4dca6" opacity="0.15" filter="url(#blur8)"/>
<path fill="#aad3df" d="M829.4,493.0 L842.0,486.8 L854.6,482.6 L863.0,479.5 L865.0,484.7 L861.0,489.0 L863.0,499.4 L867.0,510.0 L873.5,518.3 L880.0,516.2 L877.7,501.5 L884.0,497.3 L890.3,505.7 L894.5,516.2 L900.0,522.5 L910.0,530.0 L921.0,540.0 L934.0,551.0 L945.0,562.0 L956.0,572.0 L966.0,582.0 L976.0,591.0 L980.0,595.0 L879.8,595.0 L877.7,587.6 L871.4,575.0 L865.0,562.4 L858.8,552.0 L848.3,543.5 L840.0,537.2 L831.5,528.8 L829.4,518.3 L827.3,503.6 Z" />
<path fill="#aad3df" d="M757.0,532.0 L768.0,534.0 L775.0,539.0 L779.0,548.0 L781.0,559.0 L785.0,570.0 L787.0,577.0 L793.0,581.0 L798.0,588.0 L800.0,595.0 L757.0,595.0 Z" />
<path fill="none" stroke="#b8a2c0" stroke-width="1.5" stroke-linejoin="round" stroke-linecap="round" d="M757.0,411.0 L777.0,413.0 L797.0,421.0 L829.0,427.0 L837.0,421.0 L843.0,401.0 L857.0,393.0 L861.0,381.0 L849.0,365.0 L857.0,357.0" opacity="0.95"/>
<path fill="none" stroke="#b8a2c0" stroke-width="1.5" stroke-linejoin="round" stroke-linecap="round" d="M849.0,365.0 L865.0,365.0 L889.0,373.0 L913.0,369.0 L925.0,357.0" opacity="0.95"/>
<path fill="none" stroke="#b8a2c0" stroke-width="1.5" stroke-linejoin="round" stroke-linecap="round" d="M913.0,369.0 L925.0,380.0 L945.0,389.0 L937.0,417.0 L929.0,437.0 L933.0,453.0" opacity="0.95"/>
<path fill="none" stroke="#b8a2c0" stroke-width="1.5" stroke-linejoin="round" stroke-linecap="round" d="M945.0,389.0 L973.0,395.0 L997.0,405.0 L1037.0,397.0 L1048.0,393.0" opacity="0.95"/>
<path fill="none" stroke="#b8a2c0" stroke-width="1.5" stroke-linejoin="round" stroke-linecap="round" d="M785.0,437.0 L829.0,441.0 L857.0,453.0 L889.0,453.0 L917.0,449.0 L933.0,453.0" opacity="0.95"/>
<path fill="none" stroke="#b8a2c0" stroke-width="1.5" stroke-linejoin="round" stroke-linecap="round" d="M857.0,453.0 L857.0,477.0 L865.0,485.0 L893.0,485.0 L917.0,473.0 L933.0,457.0 L969.0,473.0 L997.0,477.0 L1013.0,473.0 L1029.0,461.0 L1048.0,465.0" opacity="0.95"/>
<path fill="none" stroke="#b8a2c0" stroke-width="1.5" stroke-linejoin="round" stroke-linecap="round" d="M917.0,497.0 L957.0,497.0 L997.0,501.0 L989.0,517.0 L965.0,517.0 L950.0,525.0 L933.0,533.0 L949.0,565.0 L969.0,581.0 L980.0,595.0" opacity="0.95"/>
<path fill="none" stroke="#b8a2c0" stroke-width="1.5" stroke-linejoin="round" stroke-linecap="round" d="M997.0,501.0 L1005.0,525.0 L997.0,545.0 L1013.0,561.0 L1025.0,580.0 L1048.0,575.0" opacity="0.95"/>
<path fill="none" stroke="#b8a2c0" stroke-width="1.5" stroke-linejoin="round" stroke-linecap="round" d="M757.0,461.0 L785.0,453.0 L793.0,477.0 L780.0,490.0" opacity="0.95"/>
<path fill="none" stroke="#b8a2c0" stroke-width="1.5" stroke-linejoin="round" stroke-linecap="round" d="M757.0,509.0 L789.0,505.0 L817.0,513.0 L840.0,525.0" opacity="0.95"/>
<path fill="none" stroke="#b39fbf" stroke-width="1.4" stroke-linejoin="round" stroke-linecap="round" d="M848.0,487.0 Q846.0,500.0 849.0,507.5 Q852.0,515.0 861.0,524.0 Q870.0,533.0 881.5,542.5 Q893.0,552.0 901.5,561.0 Q910.0,570.0 917.5,582.5 L925.0,595.0" opacity="0.95"/>
<path fill="none" stroke="#b39fbf" stroke-width="1.4" stroke-linejoin="round" stroke-linecap="round" d="M773.0,545.0 Q765.0,569.0 771.0,582.0 L777.0,595.0" opacity="0.95"/>
<path fill="none" stroke="#b8a2c0" stroke-width="1.5" stroke-linejoin="round" stroke-linecap="round" d="M997.0,405.0 L1000.0,440.0 L1013.0,473.0" opacity="0.95"/>
<path fill="none" stroke="#b8a2c0" stroke-width="1.5" stroke-linejoin="round" stroke-linecap="round" d="M1020.0,480.0 L1048.0,490.0" opacity="0.95"/>
<circle cx="930.7" cy="390.1" r="2.6" fill="#fff" stroke="#666" stroke-width="1"/><circle cx="930.7" cy="390.1" r="1" fill="#666"/>
<circle cx="906.3" cy="431.3" r="2" fill="#fff" stroke="#777" stroke-width="0.9"/>
<circle cx="830" cy="490.9" r="2" fill="#fff" stroke="#777" stroke-width="0.9"/>
<circle cx="1032.7" cy="512.3" r="2.6" fill="#fff" stroke="#666" stroke-width="1"/><circle cx="1032.7" cy="512.3" r="1" fill="#666"/>
<circle cx="805" cy="524.3" r="2" fill="#fff" stroke="#777" stroke-width="0.9"/>
<circle cx="980" cy="544.9" r="2.6" fill="#fff" stroke="#666" stroke-width="1"/><circle cx="980" cy="544.9" r="1" fill="#666"/>
<circle cx="832.2" cy="544" r="2.6" fill="#fff" stroke="#666" stroke-width="1"/><circle cx="832.2" cy="544" r="1" fill="#666"/>
<text class="country halo" x="979.2" y="376.4">Slovensko</text>
<text class="city halo" x="917" y="382.9">Wien</text>
<text class="country halo" x="856.6" y="414">Österreich</text>
<text class="country halo" x="953" y="433.4">Magyarország</text>
<text class="city halo" x="894.3" y="445">Graz</text>
<text class="country halo" x="857.4" y="470.7">Slovenija</text>
<text class="city halo" x="1026.3" y="475">Timi</text>
<text class="city halo" x="808.6" y="502.9">Venezia</text>
<text class="city halo" x="1009.2" y="506.3">Београ</text>
<text class="city halo" x="810.7" y="528.6">Bologna</text>
<text class="country halo" x="868.6" y="529.9">Hrvatska</text>
<text class="city halo" x="956.5" y="539.3">Sarajevo</text>
<text class="country halo" x="1022.9" y="537.2">Срб</text>
<text class="city halo" x="801.3" y="557.7">Città di San</text>
<text class="city halo" x="813.7" y="572.7">Marino</text>
<text class="city halo" x="754" y="530.7">enova</text>
<text class="country halo" x="961.6" y="582.2">Crna Gora /</text>
<text class="country halo" x="965" y="598">Црна Гора</text>
<text class="country halo" x="757" y="445.2">zera/</text>
<text class="city halo" x="757" y="485.7">no</text>
<text class="country ink" x="979.2" y="376.4">Slovensko</text>
<text class="city ink" x="917" y="382.9">Wien</text>
<text class="country ink" x="856.6" y="414">Österreich</text>
<text class="country ink" x="953" y="433.4">Magyarország</text>
<text class="city ink" x="894.3" y="445">Graz</text>
<text class="country ink" x="857.4" y="470.7">Slovenija</text>
<text class="city ink" x="1026.3" y="475">Timi</text>
<text class="city ink" x="808.6" y="502.9">Venezia</text>
<text class="city ink" x="1009.2" y="506.3">Београ</text>
<text class="city ink" x="810.7" y="528.6">Bologna</text>
<text class="country ink" x="868.6" y="529.9">Hrvatska</text>
<text class="city ink" x="956.5" y="539.3">Sarajevo</text>
<text class="country ink" x="1022.9" y="537.2">Срб</text>
<text class="city ink" x="801.3" y="557.7">Città di San</text>
<text class="city ink" x="813.7" y="572.7">Marino</text>
<text class="city ink" x="754" y="530.7">enova</text>
<text class="country ink" x="961.6" y="582.2">Crna Gora /</text>
<text class="country ink" x="965" y="598">Црна Гора</text>
<text class="country ink" x="757" y="445.2">zera/</text>
<text class="city ink" x="757" y="485.7">no</text>
<circle cx="914.6" cy="549.3" r="21.8" fill="#f08a87" opacity="0.85"/><circle cx="914.6" cy="549.3" r="16.4" fill="#d55552"/>
<text class="clu" x="914.6" y="554.4" text-anchor="middle">3</text>
</g>
<g clip-path="url(#c2b)"><ellipse cx="821.4" cy="414.7" rx="10" ry="5" fill="#000" opacity="0.16" filter="url(#blur3)" transform="rotate(-35 821.4 414.7)"/><path d="M809.4,422.7 C806.4,413.7 796.1154307204249,401.3467576791809 797.6154307204249,399.3467576791809 A13.2,13.2 0 1,1 821.184569279575,399.3467576791809 C822.684569279575,401.3467576791809 812.4,413.7 809.4,422.7 Z" fill="#151515" stroke="#000" stroke-width="0.8"/><circle cx="809.4" cy="393.7" r="4.7" fill="#fff"/></g>
</svg>
<div class="abs" style="left:45px;top:116px;width:29px;height:87.5px;background:#fff;border-radius:4px;box-shadow:0 1px 5px rgba(0,0,0,0.4)"><div class="abs" style="left:0;top:28.5px;width:29px;height:1px;background:#ccc"></div><div class="abs" style="left:0;top:58px;width:29px;height:1px;background:#ccc"></div><svg class="abs" style="left:0;top:0" width="29" height="88" viewBox="0 0 29 88"><rect x="9.8" y="10.8" width="10" height="7.8" rx="2" fill="#1a1a1a"/><path d="M6.2,6.2 L10.2,6.9 L6.9,10.2 Z M22.8,6.2 L18.8,6.9 L22.1,10.2 Z M6.2,22.3 L10.2,21.6 L6.9,18.3 Z M22.8,22.3 L18.8,21.6 L22.1,18.3 Z" fill="#111"/><path d="M9,43.6 L20,43.6 M14.5,38.1 L14.5,49.1" stroke="#111" stroke-width="2.3"/><path d="M9.3,72.5 L19.7,72.5" stroke="#111" stroke-width="2.4"/></svg></div>
<div class="abs" style="left:840px;top:0;width:240px;height:357px;background:#fff;overflow:hidden">
<div class="abs" style="left:13px;top:2px;width:227px;height:1px;background:#f3e6e8"></div>
<div class="abs" style="left:13px;top:39.50px;width:227px;height:0;border-top:1px dotted #e4e4e4"></div>
<div class="abs cb" style="left:31px;top:17.00px"></div>
<svg class="abs" style="left:55px;top:9.00px" width="26" height="28" viewBox="0 0 26 28"><circle cx="14.4" cy="8.6" r="5.7" fill="none" stroke="#000" stroke-width="1.7"/><path d="M4,19.6 L9.6,14.3" stroke="#000" stroke-width="3.9" stroke-linecap="butt"/></svg>
<div class="abs st" style="left:103.6px;top:9.10px;background:#3f8b45;border-color:#358a3c"><svg width="28" height="28" viewBox="0 0 28 28" style="position:absolute;left:-1px;top:-1px"><path d="M5.2,14.6 L8.4,11.4 L12.3,15.4 L20.8,6.2 L23.6,9 L12.3,22.2 Z" fill="#eaf2ea" stroke="#eaf2ea" stroke-width="0.8" stroke-linejoin="round"/></svg></div>
<div class="abs tt" style="left:151px;top:15.00px">00-08-e1-04-</div>
<div class="abs" style="left:13px;top:77.75px;width:227px;height:0;border-top:1px dotted #e4e4e4"></div>
<div class="abs cb" style="left:31px;top:55.25px"></div>
<svg class="abs" style="left:55px;top:47.25px" width="26" height="28" viewBox="0 0 26 28"><circle cx="14.4" cy="8.6" r="5.7" fill="none" stroke="#000" stroke-width="1.7"/><path d="M4,19.6 L9.6,14.3" stroke="#000" stroke-width="3.9" stroke-linecap="butt"/></svg>
<div class="abs st" style="left:103.6px;top:47.35px;background:#3f8b45;border-color:#358a3c"><svg width="28" height="28" viewBox="0 0 28 28" style="position:absolute;left:-1px;top:-1px"><path d="M5.2,14.6 L8.4,11.4 L12.3,15.4 L20.8,6.2 L23.6,9 L12.3,22.2 Z" fill="#eaf2ea" stroke="#eaf2ea" stroke-width="0.8" stroke-linejoin="round"/></svg></div>
<div class="abs tt" style="left:151px;top:53.25px">00-08-e1-05-</div>
<div class="abs" style="left:13px;top:116.00px;width:227px;height:0;border-top:1px dotted #e4e4e4"></div>
<div class="abs cb" style="left:31px;top:93.50px"></div>
<svg class="abs" style="left:55px;top:85.50px" width="26" height="28" viewBox="0 0 26 28"><circle cx="14.4" cy="8.6" r="5.7" fill="none" stroke="#000" stroke-width="1.7"/><path d="M4,19.6 L9.6,14.3" stroke="#000" stroke-width="3.9" stroke-linecap="butt"/></svg>
<div class="abs st" style="left:103.6px;top:85.60px;background:#c84545;border-color:#bf3b3b"><svg width="28" height="28" viewBox="0 0 28 28" style="position:absolute;left:-1px;top:-1px"><path d="M7.6,7.8 L21.4,21.6 M21.4,7.8 L7.6,21.6" fill="none" stroke="#eeeeee" stroke-width="4.8" stroke-linecap="butt"/></svg></div>
<div class="abs tt" style="left:151px;top:91.50px">00-08-e1-04-</div>
<div class="abs" style="left:13px;top:154.25px;width:227px;height:0;border-top:1px dotted #e4e4e4"></div>
<div class="abs cb" style="left:31px;top:131.75px"></div>
<svg class="abs" style="left:55px;top:123.75px" width="26" height="28" viewBox="0 0 26 28"><circle cx="14.4" cy="8.6" r="5.7" fill="none" stroke="#000" stroke-width="1.7"/><path d="M4,19.6 L9.6,14.3" stroke="#000" stroke-width="3.9" stroke-linecap="butt"/></svg>
<div class="abs st" style="left:103.6px;top:123.85px;background:#e2e2e2;border-color:#e2e2e2"></div>
<div class="abs tt" style="left:151px;top:129.75px">00-08-e1-04-</div>
<div class="abs" style="left:13px;top:192.50px;width:227px;height:0;border-top:1px dotted #e4e4e4"></div>
<div class="abs cb" style="left:31px;top:170.00px"></div>
<svg class="abs" style="left:55px;top:162.00px" width="26" height="28" viewBox="0 0 26 28"><circle cx="14.4" cy="8.6" r="5.7" fill="none" stroke="#000" stroke-width="1.7"/><path d="M4,19.6 L9.6,14.3" stroke="#000" stroke-width="3.9" stroke-linecap="butt"/></svg>
<div class="abs st" style="left:103.6px;top:162.10px;background:#c84545;border-color:#bf3b3b"><svg width="28" height="28" viewBox="0 0 28 28" style="position:absolute;left:-1px;top:-1px"><path d="M7.6,7.8 L21.4,21.6 M21.4,7.8 L7.6,21.6" fill="none" stroke="#eeeeee" stroke-width="4.8" stroke-linecap="butt"/></svg></div>
<div class="abs tt" style="left:151px;top:168.00px">00-08-e1-04-</div>
<div class="abs" style="left:13px;top:230.75px;width:227px;height:0;border-top:1px dotted #e4e4e4"></div>
<div class="abs cb" style="left:31px;top:208.25px"></div>
<svg class="abs" style="left:55px;top:200.25px" width="26" height="28" viewBox="0 0 26 28"><circle cx="14.4" cy="8.6" r="5.7" fill="none" stroke="#000" stroke-width="1.7"/><path d="M4,19.6 L9.6,14.3" stroke="#000" stroke-width="3.9" stroke-linecap="butt"/></svg>
<div class="abs st" style="left:103.6px;top:200.35px;background:#3f8b45;border-color:#358a3c"><svg width="28" height="28" viewBox="0 0 28 28" style="position:absolute;left:-1px;top:-1px"><path d="M5.2,14.6 L8.4,11.4 L12.3,15.4 L20.8,6.2 L23.6,9 L12.3,22.2 Z" fill="#eaf2ea" stroke="#eaf2ea" stroke-width="0.8" stroke-linejoin="round"/></svg></div>
<div class="abs tt" style="left:151px;top:206.25px">00-08-e1-04-</div>
<div class="abs" style="left:13px;top:269.00px;width:227px;height:0;border-top:1px dotted #e4e4e4"></div>
<div class="abs cb" style="left:31px;top:246.50px"></div>
<svg class="abs" style="left:55px;top:238.50px" width="26" height="28" viewBox="0 0 26 28"><circle cx="14.4" cy="8.6" r="5.7" fill="none" stroke="#000" stroke-width="1.7"/><path d="M4,19.6 L9.6,14.3" stroke="#000" stroke-width="3.9" stroke-linecap="butt"/></svg>
<div class="abs st" style="left:103.6px;top:238.60px;background:#3f8b45;border-color:#358a3c"><svg width="28" height="28" viewBox="0 0 28 28" style="position:absolute;left:-1px;top:-1px"><path d="M5.2,14.6 L8.4,11.4 L12.3,15.4 L20.8,6.2 L23.6,9 L12.3,22.2 Z" fill="#eaf2ea" stroke="#eaf2ea" stroke-width="0.8" stroke-linejoin="round"/></svg></div>
<div class="abs tt" style="left:151px;top:244.50px">00-08-e1-04-</div>
<div class="abs cb" style="left:31px;top:284.75px"></div>
<svg class="abs" style="left:55px;top:276.75px" width="26" height="28" viewBox="0 0 26 28"><circle cx="14.4" cy="8.6" r="5.7" fill="none" stroke="#000" stroke-width="1.7"/><path d="M4,19.6 L9.6,14.3" stroke="#000" stroke-width="3.9" stroke-linecap="butt"/></svg>
<div class="abs st" style="left:103.6px;top:276.85px;background:#c84545;border-color:#bf3b3b"><svg width="28" height="28" viewBox="0 0 28 28" style="position:absolute;left:-1px;top:-1px"><path d="M7.6,7.8 L21.4,21.6 M21.4,7.8 L7.6,21.6" fill="none" stroke="#eeeeee" stroke-width="4.8" stroke-linecap="butt"/></svg></div>
<div class="abs tt" style="left:151px;top:282.75px">00-08-e1-04-</div>
<div class="abs" style="left:13px;top:306.5px;width:227px;height:1px;background:#f3e6e8"></div>
<div class="abs" style="left:13px;top:315px;width:84.4px;height:29.3px;background:#ececec"></div>
<div class="abs" style="left:20.5px;top:320px;font-size:16.6px;letter-spacing:-0.15px;color:#111;white-space:nowrap;line-height:19px">Actions</div>
<svg class="abs" style="left:81px;top:325px" width="10" height="8" viewBox="0 0 10 8"><path d="M0.8,0.5 L8.2,0.5 L4.5,7 Z" fill="#111"/></svg>
<div class="abs" style="left:13px;top:350px;width:227px;height:1px;background:#f3e6e8"></div>
</div>
<div class="abs" style="left:0;top:406px;width:757px;height:189px;background:#fff;overflow:hidden">
<div class="abs" style="left:254.88px;top:10px;width:1px;height:171px;background:#f6ecee"></div>
<div class="abs" style="left:297.75px;top:10px;width:1px;height:171px;background:#f6ecee"></div>
<div class="abs" style="left:340.62px;top:10px;width:1px;height:171px;background:#f6ecee"></div>
<div class="abs" style="left:383.50px;top:10px;width:1px;height:171px;background:#f6ecee"></div>
<div class="abs" style="left:426.38px;top:10px;width:1px;height:171px;background:#f6ecee"></div>
<div class="abs" style="left:469.25px;top:10px;width:1px;height:171px;background:#f6ecee"></div>
<div class="abs" style="left:512.12px;top:10px;width:1px;height:171px;background:#f6ecee"></div>
<div class="abs" style="left:555.00px;top:10px;width:1px;height:171px;background:#f6ecee"></div>
<div class="abs" style="left:597.88px;top:10px;width:1px;height:171px;background:#f6ecee"></div>
<div class="abs" style="left:640.75px;top:10px;width:1px;height:171px;background:#f6ecee"></div>
<div class="abs" style="left:683.62px;top:10px;width:1px;height:171px;background:#f6ecee"></div>
<div class="abs tl" style="left:215.50px;top:13px">00:00</div>
<div class="abs tl" style="left:215.50px;top:151px">00:00</div>
<div class="abs tl" style="left:258.38px;top:13px">02:00</div>
<div class="abs tl" style="left:258.38px;top:151px">02:00</div>
<div class="abs tl" style="left:301.25px;top:13px">04:00</div>
<div class="abs tl" style="left:301.25px;top:151px">04:00</div>
<div class="abs tl" style="left:344.12px;top:13px">06:00</div>
<div class="abs tl" style="left:344.12px;top:151px">06:00</div>
<div class="abs tl" style="left:387.00px;top:13px">08:00</div>
<div class="abs tl" style="left:387.00px;top:151px">08:00</div>
<div class="abs tl" style="left:429.88px;top:13px">10:00</div>
<div class="abs tl" style="left:429.88px;top:151px">10:00</div>
<div class="abs tl" style="left:472.75px;top:13px">12:00</div>
<div class="abs tl" style="left:472.75px;top:151px">12:00</div>
<div class="abs tl" style="left:515.62px;top:13px">14:00</div>
<div class="abs tl" style="left:515.62px;top:151px">14:00</div>
<div class="abs tl" style="left:558.50px;top:13px">16:00</div>
<div class="abs tl" style="left:558.50px;top:151px">16:00</div>
<div class="abs tl" style="left:601.38px;top:13px">18:00</div>
<div class="abs tl" style="left:601.38px;top:151px">18:00</div>
<div class="abs tl" style="left:644.25px;top:13px">20:00</div>
<div class="abs tl" style="left:644.25px;top:151px">20:00</div>
<div class="abs tl" style="left:687.12px;top:13px">22:00</div>
<div class="abs tl" style="left:687.12px;top:151px">22:00</div>
<div class="abs" style="left:14px;top:42px;width:198px;height:23.5px;background:#03b9f2"></div>
<div class="abs lb" style="left:22px;top:47.5px;color:#123">Stream: Barix Radio HiQuality</div>
<div class="abs" style="left:212px;top:42px;width:514px;height:23.5px;background:#03b9f2;border:1px solid #1a1a1a"></div>
<div class="abs" style="left:14px;top:78px;width:198px;height:23.5px;background:#000000"></div>
<div class="abs lb" style="left:22px;top:83.5px;color:#fff">Continuity</div>
<div class="abs" style="left:212px;top:78px;width:514px;height:23.5px;background:#03b9f2;border:1px solid #1a1a1a"></div>
<div class="abs" style="left:14px;top:113.5px;width:198px;height:23.5px;background:#6a6a6a"></div>
<div class="abs lb" style="left:22px;top:119.0px;color:#fff">Failover Playlist: PhaxeFAILOVER</div>
<div class="abs" style="left:212px;top:113.5px;width:514px;height:23.5px;background:#6a6a6a;border:1px solid #1a1a1a"></div>
<svg class="abs" style="left:0;top:0" width="757" height="189" viewBox="0 406 757 189"><path d="M218,459.8 L223.2,454.6 L223.2,458.2 L230,458.2 L230,461.4 L223.2,461.4 L223.2,464.7 Z M720.7,459.8 L715.5,454.8 L715.5,458.1 L708.6,458.1 L708.6,461.4 L715.5,461.4 L715.5,464.7 Z" fill="#1a0f0f" stroke="#1a0f0f" stroke-width="0.6" stroke-linejoin="round"/></svg>
<div class="abs" style="left:212px;top:10px;width:1px;height:171px;background:#111"></div>
</div>
</body></html>
